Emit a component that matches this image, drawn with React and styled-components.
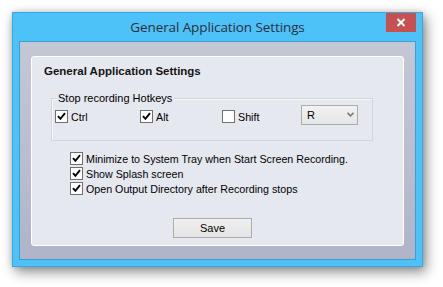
import React, { useState } from "react";
import styled, { createGlobalStyle } from "styled-components";

const GlobalStyle = createGlobalStyle`
  html, body {
    margin: 0;
    padding: 0;
    background: #ffffff;
  }
  body {
    font-family: "Liberation Sans", Arial, sans-serif;
  }
`;

const Page = styled.div`
  width: 443px;
  height: 287px;
  padding: 12px 0 0 12px;
  box-sizing: border-box;
`;

const Window = styled.div`
  width: 411px;
  height: 255px;
  box-sizing: border-box;
  background: #4cc2f8;
  border: 1px solid #3aa8de;
  box-shadow: 3px 5px 12px rgba(0, 0, 0, 0.45), 0 0 6px rgba(0, 0, 0, 0.15);
  display: flex;
  flex-direction: column;
`;

const TitleBar = styled.div`
  height: 28px;
  display: flex;
  align-items: flex-start;
  position: relative;
`;

const Title = styled.div`
  flex: 1;
  text-align: center;
  font-family: "Open Sans", "Noto Sans", sans-serif;
  font-size: 13.5px;
  line-height: 28px;
  color: #2b2f3a;
  letter-spacing: -0.1px;
`;

const CloseButton = styled.div`
  position: absolute;
  top: 0;
  right: 6px;
  width: 30px;
  height: 19px;
  background: #c75050;
  display: flex;
  align-items: center;
  justify-content: center;
`;

const Client = styled.div`
  flex: 1;
  margin: 0 6px 6px 6px;
  border: 1px solid #3aa0d2;
  background: linear-gradient(to bottom, #c4c8d4, #b0b4c9);
  padding: 14px 11px 13px 11px;
  display: flex;
`;

const Panel = styled.div`
  flex: 1;
  background: #e6e8f0;
  border: 1px solid #ffffff;
  border-radius: 3px;
  padding: 6px 0 0 12px;
  display: flex;
  flex-direction: column;
`;

const Heading = styled.div`
  font-weight: bold;
  font-size: 11.5px;
  color: #141414;
  line-height: 16px;
`;

const GroupBox = styled.div`
  position: relative;
  margin: 19px 0 0 7px;
  width: 322px;
  height: 43px;
  box-sizing: border-box;
  border: 1px solid #d2d5de;
  box-shadow: inset 1px 1px 0 #f6f7fa;
  padding: 11px 0 0 3px;
`;

const Legend = styled.span`
  position: absolute;
  top: -8px;
  left: 5px;
  font-size: 11px;
  line-height: 14px;
  color: #000;
  padding: 0 2px 0 1px;
  background: #e6e8f0;
`;

const HotkeyRow = styled.div`
  display: flex;
  align-items: center;
  height: 13px;
`;

const CheckLabel = styled.label`
  display: flex;
  align-items: center;
  gap: 3px;
  font-size: 10.7px;
  color: #000;
  width: ${(p) => p.width || "auto"};
  height: ${(p) => p.h || "13px"};
  cursor: default;
`;

const Box = styled.span`
  width: 11px;
  height: 11px;
  border: 1px solid #6f6f6f;
  background: #ffffff;
  display: flex;
  align-items: center;
  justify-content: center;
  flex-shrink: 0;
`;

const Combo = styled.div`
  width: 57px;
  height: 20px;
  box-sizing: border-box;
  border: 1px solid #acacac;
  background: linear-gradient(to bottom, #f2f2f2, #e6e6e6);
  display: flex;
  align-items: center;
  justify-content: space-between;
  padding: 0 3px 0 5px;
  font-size: 11px;
  color: #000;
  margin: -4px 0 0 1px;
`;

const Options = styled.div`
  display: flex;
  flex-direction: column;
  margin: 10px 0 0 26px;
`;

const ButtonRow = styled.div`
  display: flex;
  margin: 22px 0 0 129px;
`;

const Button = styled.button`
  width: 79px;
  height: 20px;
  border: 1px solid #acacac;
  background: linear-gradient(to bottom, #f0f0f0, #e4e4e4);
  font-family: "Liberation Sans", Arial, sans-serif;
  font-size: 11px;
  color: #000;
  padding: 0;
`;

function Check({ checked, onToggle }) {
  return (
    <Box onClick={onToggle}>
      {checked && (
        <svg width="9" height="9" viewBox="0 0 9 9">
          <path
            d="M1 4.2 L3.4 6.8 L8 1.2"
            fill="none"
            stroke="#000"
            strokeWidth="1.9"
          />
        </svg>
      )}
    </Box>
  );
}

export default function App() {
  const [keys, setKeys] = useState({ ctrl: true, alt: true, shift: false });
  const [opts, setOpts] = useState({ tray: true, splash: true, open: true });

  const toggleKey = (k) => setKeys({ ...keys, [k]: !keys[k] });
  const toggleOpt = (k) => setOpts({ ...opts, [k]: !opts[k] });

  return (
    <>
      <GlobalStyle />
      <Page>
        <Window>
          <TitleBar>
            <Title>General Application Settings</Title>
            <CloseButton>
              <svg width="10" height="9" viewBox="0 0 10 9">
                <path
                  d="M1.5 1 L8.5 8 M8.5 1 L1.5 8"
                  stroke="#fff"
                  strokeWidth="2"
                />
              </svg>
            </CloseButton>
          </TitleBar>
          <Client>
            <Panel>
              <Heading>General Application Settings</Heading>
              <GroupBox>
                <Legend>Stop recording Hotkeys</Legend>
                <HotkeyRow>
                  <CheckLabel width="85px">
                    <Check checked={keys.ctrl} onToggle={() => toggleKey("ctrl")} />
                    Ctrl
                  </CheckLabel>
                  <CheckLabel width="82px">
                    <Check checked={keys.alt} onToggle={() => toggleKey("alt")} />
                    Alt
                  </CheckLabel>
                  <CheckLabel width="78px">
                    <Check checked={keys.shift} onToggle={() => toggleKey("shift")} />
                    Shift
                  </CheckLabel>
                  <Combo>
                    R
                    <svg width="7" height="5" viewBox="0 0 7 5">
                      <path d="M0.5 0.8 L3.5 3.8 L6.5 0.8" fill="none" stroke="#7a7a7a" strokeWidth="1.6" />
                    </svg>
                  </Combo>
                </HotkeyRow>
              </GroupBox>
              <Options>
                <CheckLabel h="15px">
                  <Check checked={opts.tray} onToggle={() => toggleOpt("tray")} />
                  Minimize to System Tray when Start Screen Recording.
                </CheckLabel>
                <CheckLabel h="15px">
                  <Check checked={opts.splash} onToggle={() => toggleOpt("splash")} />
                  Show Splash screen
                </CheckLabel>
                <CheckLabel h="15px">
                  <Check checked={opts.open} onToggle={() => toggleOpt("open")} />
                  Open Output Directory after Recording stops
                </CheckLabel>
              </Options>
              <ButtonRow>
                <Button>Save</Button>
              </ButtonRow>
            </Panel>
          </Client>
        </Window>
      </Page>
    </>
  );
}
